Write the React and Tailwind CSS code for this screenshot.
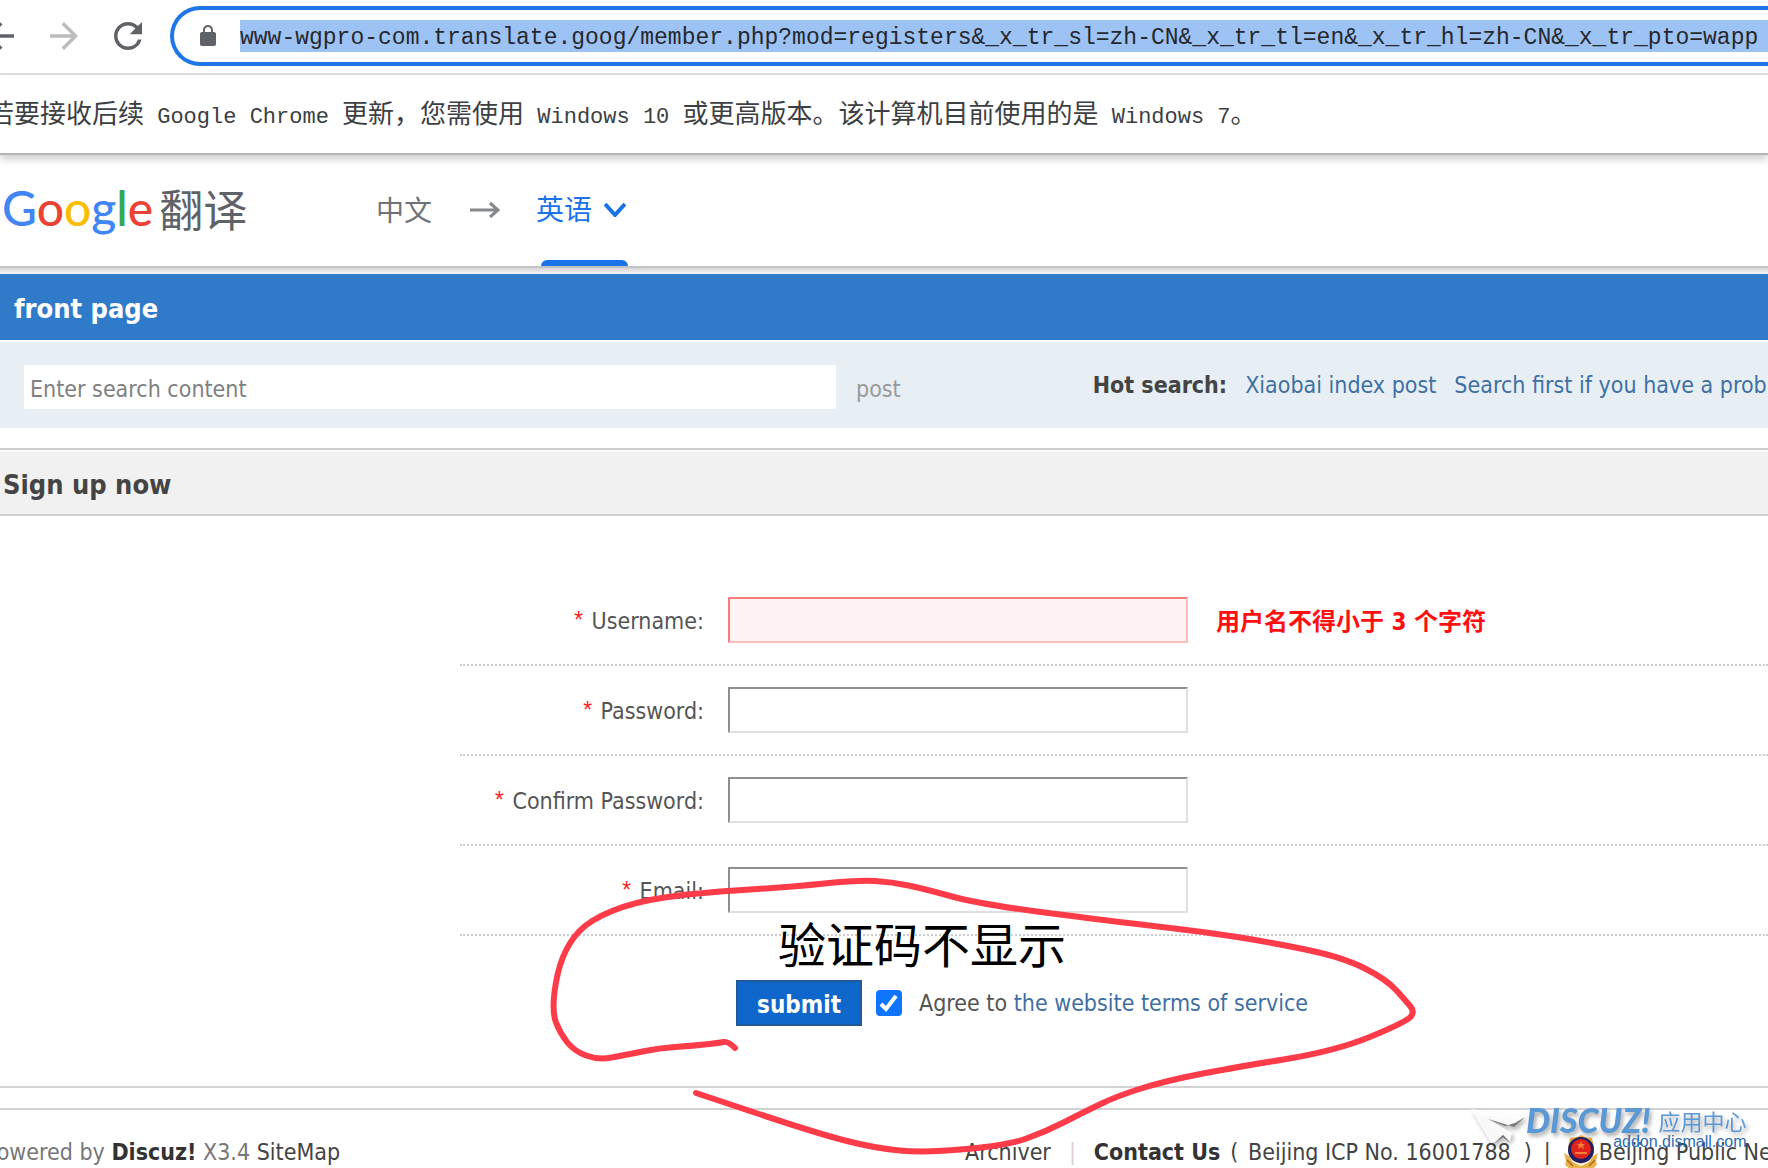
import { useState } from "react";

/* ===================== Data ===================== */
const URL_TEXT =
  "www-wgpro-com.translate.goog/member.php?mod=registers&_x_tr_sl=zh-CN&_x_tr_tl=en&_x_tr_hl=zh-CN&_x_tr_pto=wapp";

const FIELDS = [
  { id: "username", label: "Username:", type: "text", error: "用户名不得小于 3 个字符" },
  { id: "password", label: "Password:", type: "password" },
  { id: "password2", label: "Confirm Password:", type: "password" },
  { id: "email", label: "Email:", type: "text" },
];

const PEN_POINTS = [
  [735, 1048], [728, 1041], [719, 1043], [690, 1046], [660, 1048], [625, 1055], [598, 1060], [574, 1051],
  [560, 1033], [552, 1012], [557, 972], [569, 942], [590, 920], [634, 902], [695, 893],
  [791, 887], [858, 880], [892, 882], [925, 889], [979, 904], [1110, 921], [1205, 932],
  [1269, 942], [1342, 957], [1386, 979], [1406, 1001], [1415, 1012], [1406, 1022], [1336, 1051],
  [1231, 1068], [1165, 1081], [1117, 1096], [1082, 1113], [1045, 1132], [1008, 1145], [925, 1153],
  [874, 1148], [816, 1133], [696, 1093],
];

/* ===================== Utils ===================== */
// Smooth line through the midpoints of the given points
const smoothPath = (points) => {
  let d = `M${points[0][0]} ${points[0][1]}`;
  for (let i = 1; i < points.length - 1; i++) {
    const [x, y] = points[i];
    const [nx, ny] = points[i + 1];
    d += ` Q${x} ${y} ${(x + nx) / 2} ${(y + ny) / 2}`;
  }
  const last = points[points.length - 1];
  return `${d} L${last[0]} ${last[1]}`;
};

/* ===================== Icons ===================== */
function Icon({ d, className }) {
  return (
    <svg viewBox="0 0 24 24" fill="currentColor" className={className} aria-hidden="true">
      <path d={d} />
    </svg>
  );
}

const ICONS = {
  back: "M20 11H7.83l5.59-5.59L12 4l-8 8 8 8 1.41-1.41L7.83 13H20v-2z",
  forward: "M12 4l-1.41 1.41L16.17 11H4v2h12.17l-5.58 5.59L12 20l8-8z",
  reload:
    "M17.65 6.35A7.96 7.96 0 0012 4c-4.42 0-7.99 3.58-7.99 8s3.57 8 7.99 8c3.73 0 6.84-2.55 7.73-6h-2.08A5.99 5.99 0 0112 18c-3.31 0-6-2.69-6-6s2.69-6 6-6c1.66 0 3.14.69 4.22 1.78L13 11h7V4l-2.35 2.35z",
  lock: "M18 8h-1V6c0-2.76-2.24-5-5-5S7 3.24 7 6v2H6c-1.1 0-2 .9-2 2v10c0 1.1.9 2 2 2h12c1.1 0 2-.9 2-2V10c0-1.1-.9-2-2-2zM8.9 8V6c0-1.71 1.39-3.1 3.1-3.1s3.1 1.39 3.1 3.1v2H8.9z",
};

function PoliceBadge() {
  return (
    <svg viewBox="0 0 36 36" className="w-9 h-9 shrink-0" aria-hidden="true">
      <path d="M1 18l5 3 4 6 8 4 8-4 4-6 5-3-2 8 1 4-6 5H8l-6-5 1-4z" fill="#e9b44c" />
      <path d="M4 25l6 6M32 25l-6 6" stroke="#b87a22" strokeWidth="2" />
      <path d="M18 0l4 2 7 1 2 9-2 9-6 6-5 2-5-2-6-6-2-9 2-9 7-1z" fill="#e8a53c" />
      <circle cx="18" cy="15" r="13" fill="#1d2063" />
      <circle cx="18" cy="14" r="10" fill="#e0231b" />
      <path d="M18 6l1 3h3l-2 2 1 3-3-2-3 2 1-3-2-2h3zM12 17h12v2H12z" fill="#f6803c" />
    </svg>
  );
}

/* ===================== Browser ===================== */
function BrowserBar() {
  return (
    <div className="flex items-center h-[75px] pt-[6px] pb-[7px] border-b-2 border-[#dfe0e1]">
      <div className="flex gap-[22px] -ml-[21px] mr-[21px] shrink-0 text-[#5f6368]">
        <button aria-label="Back">
          <Icon d={ICONS.back} className="w-[42px] h-[42px]" />
        </button>
        <button aria-label="Forward" className="text-[#bbbcbe]">
          <Icon d={ICONS.forward} className="w-[42px] h-[42px]" />
        </button>
        <button aria-label="Reload">
          <Icon d={ICONS.reload} className="w-[42px] h-[42px]" />
        </button>
      </div>
      <div className="flex flex-1 min-w-0 items-center h-[60px] rounded-l-full border-4 border-r-0 border-[#1f76e8] pl-[22px]">
        <Icon d={ICONS.lock} className="w-6 h-6 mr-5 shrink-0 text-[#5f6368]" />
        <input
          aria-label="Address"
          defaultValue={URL_TEXT}
          className="flex-1 min-w-0 h-8 pt-1 bg-[#9dc3f4] text-[#26282d] text-[23px] font-['Liberation_Mono',monospace] outline-none"
        />
      </div>
    </div>
  );
}

function UpdateNotice() {
  return (
    <div className="relative z-10 flex items-center h-20 pt-1 border-b-2 border-[#b4b5b6] shadow-[0_4px_8px_rgba(0,0,0,0.2)] bg-white">
      <p className="-ml-3 whitespace-pre text-[22px] text-[#3c4043] font-['Liberation_Mono','Noto_Sans_CJK_SC',monospace]">
        <span className="text-[26px]">若要接收后续</span> Google Chrome{" "}
        <span className="text-[26px]">更新，您需使用</span> Windows 10{" "}
        <span className="text-[26px]">或更高版本。该计算机目前使用的是</span> Windows 7
        <span className="text-[26px]">。</span>
      </p>
    </div>
  );
}

/* ===================== Translate bar ===================== */
function TranslateBar() {
  return (
    <div className="flex h-[113px] border-b-2 border-[#c2c3c4] font-['Noto_Sans_CJK_SC',sans-serif]">
      <div className="flex items-center h-[105px] pl-[2px] w-[376px] shrink-0">
        <span className="text-[48px] leading-[56px] font-['Lato',sans-serif] font-medium">
          <span className="text-[#4285f4]">G</span>
          <span className="text-[#ea4335]">o</span>
          <span className="text-[#fbbc05]">o</span>
          <span className="text-[#4285f4]">g</span>
          <span className="text-[#34a853]">l</span>
          <span className="text-[#ea4335]">e</span>
        </span>
        <span className="ml-[6px] text-[44px] leading-[56px] text-[#5f6368]">翻译</span>
      </div>
      <span className="flex items-center h-[107px] text-[28px] text-[#6f7377]">中文</span>
      <svg viewBox="0 0 30 18" className="w-[30px] h-[18px] ml-[38px] mr-9 mt-[46px] shrink-0" fill="none" stroke="#85888c" strokeWidth="3">
        <path d="M0 9h28M20 2l8 7-8 7" />
      </svg>
      <button className="flex items-center gap-3 h-[105px] text-[28px] text-[#1a73e8]">
        英语
        <svg viewBox="0 0 22 14" className="w-[22px] h-[14px] mt-1" fill="none" stroke="currentColor" strokeWidth="4">
          <path d="M1 1l10 11L21 1" />
        </svg>
      </button>
    </div>
  );
}

/* ===================== Site header ===================== */
function SiteHeader() {
  return (
    <>
      <nav className="flex items-center h-[66px] pt-1 pl-[14px] bg-[#307bc9] text-white text-[27px] font-bold">
        <a href="#home">front page</a>
      </nav>
      <div className="flex items-center h-[86px] mt-[2px] pl-6 bg-[#e7eff5] text-[23px] whitespace-nowrap overflow-hidden">
        <input
          aria-label="Search"
          placeholder="Enter search content"
          className="w-[812px] h-11 mt-1 pt-1 px-[6px] shrink-0 bg-white placeholder:text-[#808080] outline-none"
        />
        <button className="ml-5 mt-2 text-[#999999]">post</button>
        <div className="flex ml-[192px]">
          <strong className="mr-[18px] text-[#444444]">Hot search:</strong>
          <a href="#index" className="mr-[18px] text-[#3f6fa3]">Xiaobai index post</a>
          <a href="#problem" className="text-[#3f6fa3]">Search first if you have a problem</a>
        </div>
      </div>
    </>
  );
}

/* ===================== Form ===================== */
function FieldRow({ field }) {
  const box = field.error
    ? "border-t-[#fb7b7b] border-l-[#fb7b7b] border-b-[#fdbdbd] border-r-[#fdbdbd] bg-[#fff3f3]"
    : "border-t-[#8f8f8f] border-l-[#8f8f8f] border-b-[#e0e0e0] border-r-[#e0e0e0] bg-white";

  return (
    <div className="flex items-center h-[90px] ml-[460px] border-b-2 border-dotted border-[#cdcdcd]">
      <label htmlFor={field.id} className="w-[244px] mr-6 pt-1 shrink-0 text-right text-[#555555]">
        <span className="mr-[6px] text-[#ff1f1f] font-['Liberation_Mono',monospace]">*</span>
        {field.label}
      </label>
      <input
        id={field.id}
        type={field.type}
        className={`w-[460px] h-[46px] px-2 shrink-0 border-2 outline-none ${box}`}
      />
      {field.error && (
        <strong className="ml-7 pt-1 text-2xl text-[#ff1010] whitespace-nowrap">{field.error}</strong>
      )}
    </div>
  );
}

function SignUpForm() {
  const [agree, setAgree] = useState(true);

  return (
    <form onSubmit={(e) => e.preventDefault()} className="mt-5 border-t-2 border-[#cfcfcf] text-[23px]">
      <h1 className="flex items-center h-[66px] pt-1 pl-[3px] border-t-2 border-b-2 border-t-[#fafafa] border-b-[#cfcfcf] bg-[#f1f1f1] text-[27px] font-bold text-[#444444]">
        Sign up now
      </h1>
      <div className="pt-[60px]">
        {FIELDS.map((field) => (
          <FieldRow key={field.id} field={field} />
        ))}
      </div>
      <div className="flex items-center h-[152px] pb-[16px] pl-[736px] border-b-2 border-[#d2d2d2]">
        <button className="w-[126px] h-[46px] pt-1 border-2 border-[#235994] bg-[#1067cb] text-[24px] leading-[30px] font-bold text-white">
          submit
        </button>
        <span className="relative ml-[14px] w-[26px] h-[26px]">
          <input
            id="agree"
            type="checkbox"
            checked={agree}
            onChange={() => setAgree(!agree)}
            className="block w-[26px] h-[26px] rounded-[4px] appearance-none border-2 border-[#0f75ff] checked:bg-[#0f75ff]"
          />
          {agree && (
            <svg viewBox="0 0 26 26" className="absolute inset-0 pointer-events-none" fill="none" stroke="#fff" strokeWidth="4">
              <path d="M5 14l5 5L20 6" />
            </svg>
          )}
        </span>
        <div className="ml-[17px] text-[#555555]">
          <label htmlFor="agree">Agree to </label>
          <a href="#terms" className="text-[#3f6fa3]">the website terms of service</a>
        </div>
      </div>
    </form>
  );
}

/* ===================== Footer ===================== */
function Footer() {
  return (
    <footer className="mt-5 h-[60px] pt-[27px] border-t-2 border-[#d2d2d2] flex items-center overflow-hidden whitespace-nowrap text-[23px] text-[#444444]">
      <p className="-ml-[15px] w-[980px] shrink-0 text-[#777777]">
        Powered by <strong className="text-[#333333]">Discuz!</strong> X3.4{" "}
        <a href="#sitemap" className="text-[#444444]">SiteMap</a>
      </p>
      <a href="#archiver">Archiver</a>
      <span className="mx-[18px] text-[#dccfcf]">|</span>
      <a href="#contact" className="mr-[10px] font-bold text-[#333333]">Contact Us</a>
      <span>( <a href="#icp" className="mx-[3px]">Beijing ICP No. 16001788</a></span>
      <span className="ml-[10px]">)</span>
      <span className="ml-3">|</span>
      <span className="ml-[12px]">
        <PoliceBadge />
      </span>
      <a href="#police">Beijing Public Network Security</a>
    </footer>
  );
}

/* ===================== Overlays ===================== */
function Watermark() {
  return (
    <div className="absolute left-[1470px] top-[1108px] flex items-start whitespace-nowrap">
      <svg viewBox="0 0 56 42" className="w-14 h-[42px] shrink-0 drop-shadow-[2px_3px_2px_rgba(0,0,0,0.3)]">
        <path d="M1 1l54 8-11 10-26-8 24 14-2 8-7-6-8 7-4 1z" fill="#fff" fillOpacity="0.9" />
        <path d="M18 11l26 8 11-10-10 6-10 3z" fill="#777" />
        <path d="M25 35l8-6 7 6-7-8z" fill="#666" />
      </svg>
      <div className="flex flex-col items-end">
        <div className="flex items-center h-6 gap-2 text-[#5b98d6] drop-shadow-[2px_3px_2px_rgba(0,0,0,0.35)]">
          <span className="text-[34px] leading-6 italic font-black font-['Lato',sans-serif]">DISCUZ!</span>
          <span className="text-[22px] leading-6 font-['Noto_Sans_CJK_SC',sans-serif]">应用中心</span>
        </div>
        <span className="text-base leading-5 text-[#2c6cb0] font-['Liberation_Sans',sans-serif]">
          addon.dismall.com
        </span>
      </div>
    </div>
  );
}

function PenNotes() {
  return (
    <>
      <span className="absolute left-[778px] top-[913px] text-[48px] leading-[58px] text-black font-['Noto_Sans_CJK_SC',sans-serif] whitespace-nowrap">
        验证码不显示
      </span>
      <svg
        viewBox="540 870 880 290"
        className="absolute left-[540px] top-[870px] w-[880px] h-[290px] pointer-events-none"
        fill="none"
        stroke="#fd3b49"
        strokeWidth="6"
        strokeLinecap="round"
        strokeLinejoin="round"
      >
        <path d={smoothPath(PEN_POINTS)} />
      </svg>
    </>
  );
}

/* ===================== Page ===================== */
export default function App() {
  return (
    <div className="relative min-h-screen overflow-hidden bg-white font-['DejaVu_Sans_Condensed','Noto_Sans_CJK_SC',sans-serif]">
      <BrowserBar />
      <UpdateNotice />
      <div className="relative">
        <TranslateBar />
        <div className="absolute left-[541px] bottom-[2px] w-[87px] h-[6px] rounded-t-md bg-[#1a73e8]" />
      </div>
      <div className="h-[6px] bg-linear-to-b from-[#d6d6d6] to-[#f4f4f4]" />
      <SiteHeader />
      <SignUpForm />
      <Footer />
      <PenNotes />
      <Watermark />
    </div>
  );
}
